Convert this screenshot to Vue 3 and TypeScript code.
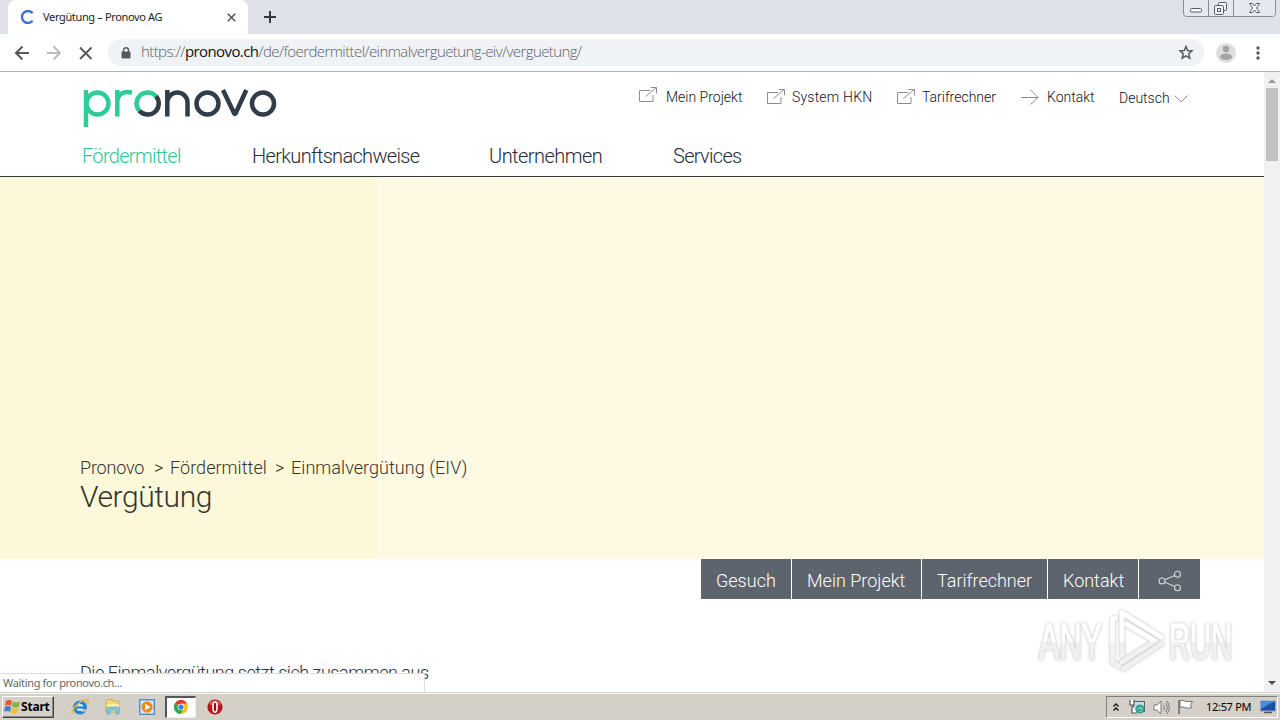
<script setup lang="ts">
interface TextItem {
  label: string
  cls: string
}

const topLinks: TextItem[] = [
  { label: 'Mein Projekt', cls: 'projekt' },
  { label: 'System HKN', cls: 'hkn' },
  { label: 'Tarifrechner', cls: 'tarif' },
]
const mainNav: TextItem[] = [
  { label: 'Fördermittel', cls: 'n1 active' },
  { label: 'Herkunftsnachweise', cls: 'n2' },
  { label: 'Unternehmen', cls: 'n3' },
  { label: 'Services', cls: 'n4' },
]
const actions: TextItem[] = [
  { label: 'Gesuch', cls: 'a1' },
  { label: 'Mein Projekt', cls: 'a2' },
  { label: 'Tarifrechner', cls: 'a3' },
  { label: 'Kontakt', cls: 'a4' },
]
</script>

<template>
  <div class="screen">
    <div class="tabstrip">
      <div class="tab">
        <svg class="spinner" width="14" height="14" viewBox="0 0 14 14"><path d="M11.6 3.200A6 6 0 1 0 11.600 10.800" fill="none" stroke="#3b6fd8" stroke-width="2.300" /></svg>
        <span class="tab-title">Vergütung – Pronovo AG</span>
        <svg class="tab-close" width="9" height="9" viewBox="0 0 9 9"><path d="M.8.8l7.4 7.4M8.2.8L.8 8.2" stroke="#55585c" stroke-width="1.6" /></svg>
      </div>
      <svg class="plus" width="12" height="12" viewBox="0 0 12 12"><path d="M6 0v12M0 6h12" stroke="#35383d" stroke-width="2" /></svg>
      <svg class="winbtns" width="95" height="18" viewBox="0 0 95 18">
        <path d="M.5 0v13.5q0 3 3 3h86q3 0 3-3V0M25.500 0v16M50.500 0v16" fill="#e5e8ee" stroke="#878c99" />
        <rect x="7.500" y="8.500" width="11" height="3.500" rx="1" fill="#fff" stroke="#555b69" />
        <g fill="#f5f6f8" stroke="#555b69"><rect x="35.500" y="2.500" width="8" height="8" rx="1" /><rect x="31.500" y="5.500" width="9" height="9" rx="1" /><rect x="34.500" y="8.500" width="3" height="3" /></g>
        <path d="M66.500 3.500h3l2 2.500 2-2.500h3L73.500 8l3 4.500h-3l-2-2.500-2 2.500h-3L69.500 8z" fill="#fff" stroke="#555b69" />
      </svg>
    </div>

    <div class="toolbar">
      <svg class="navicons" width="82" height="16" viewBox="0 0 82 16" fill="none" stroke-width="2">
        <path d="M15 8H2M8.500 1.500L2 8l6.500 6.500" stroke="#55585c" />
        <path d="M33 8h13M39.500 1.500L46 8l-6.500 6.500" stroke="#b9bbbe" />
        <path d="M66 2.500l11.500 11.500M77.500 2.500l-11.500 11.500" stroke="#55585c" stroke-width="1.900" />
      </svg>
      <div class="omnibox">
        <svg class="lock" width="10" height="12" viewBox="0 0 10 12"><rect x="0.500" y="4.500" width="9" height="7" rx="1" fill="#55595e" /><path d="M2.500 5V3.300a2.500 2.500 0 0 1 5 0V5" fill="none" stroke="#55595e" stroke-width="1.400" /></svg>
        <span class="url">https://<b>pronovo.ch</b>/de/foerdermittel/einmalverguetung-eiv/verguetung/</span>
        <svg class="star" width="16" height="15" viewBox="0 0 16 15"><path d="M8 1.500l1.700 4 4.300.4-3.200 2.900 1 4.300L8 10.800l-3.800 2.300 1-4.300L2 5.900l4.300-.4z" fill="none" stroke="#55595e" stroke-width="1.500" /></svg>
      </div>
      <svg class="avatar" width="20" height="20" viewBox="0 0 20 20"><circle cx="10" cy="10" r="10" fill="#dedede" /><circle cx="10" cy="6" r="3.200" fill="#a4a4a4" /><ellipse cx="10" cy="13.700" rx="6" ry="3.200" fill="#a4a4a4" /></svg>
      <svg class="dots" width="4" height="14" viewBox="0 0 4 14" fill="#55585c"><circle cx="2" cy="2" r="1.700" /><circle cx="2" cy="7" r="1.700" /><circle cx="2" cy="12" r="1.700" /></svg>
    </div>

    <div class="viewport">
      <main class="page">
        <header class="header">
          <div class="brandrow">
            <svg class="logo" width="194" height="40" viewBox="0 0 194 40" fill="none" stroke-width="4.500">
              <g stroke="#2dcc98">
                <path d="M3 2v37" />
                <circle cx="14.500" cy="15.500" r="11" />
                <path d="M34.300 2v26.500M34.300 13.500C34.500 6 41 2.500 49 4.800" />
                <path d="M56.300 22.800A11 11 0 0 1 73 8.200" />
              </g>
              <g stroke="#323c46">
                <path d="M73 8.200A11 11 0 1 1 56.300 22.800" />
                <path d="M84.300 2v26.500M84.300 14.500A10.100 10.100 0 0 1 104.500 14.500V28.500" />
                <circle cx="124.500" cy="15.500" r="11" />
                <path d="M140 2l11.500 24h.8L163.300 2" stroke-linejoin="bevel" />
                <circle cx="180" cy="15.500" r="11" />
              </g>
            </svg>
            <div class="toplinks">
              <a v-for="l in topLinks" :key="l.label" :class="['toplink', l.cls]">
                <svg width="19" height="16" viewBox="0 0 19 16" fill="none" stroke="#8d8d8d"><path d="M11 3.500H.5v11h13.500V8M6.500 9.500L17 .8M11.500.5h6v6" /></svg>
                <span>{{ l.label }}</span>
              </a>
              <a class="toplink kontakt">
                <svg width="19" height="16" viewBox="0 0 19 16" fill="none" stroke="#8d8d8d"><path d="M0 8.500h17M9.500.8l7.500 7.700-7.500 7" /></svg>
                <span>Kontakt</span>
              </a>
              <a class="toplink lang">
                <span>Deutsch</span>
                <svg width="14" height="8" viewBox="0 0 14 8" fill="none" stroke="#8d8d8d"><path d="M.5.500l6.500 6.500 6.500-6.500" /></svg>
              </a>
            </div>
          </div>
          <nav class="mainnav">
            <a v-for="n in mainNav" :key="n.label" :class="n.cls"><span>{{ n.label }}</span></a>
          </nav>
        </header>
        <section class="hero">
          <div class="crumbs"><span class="c1">Pronovo</span><span class="c2"><i>&gt;</i>Fördermittel</span><span class="c3"><i>&gt;</i>Einmalvergütung (EIV)</span></div>
          <h1><span>Vergütung</span></h1>
        </section>
        <div class="actions">
          <a v-for="a in actions" :key="a.label" :class="a.cls"><span>{{ a.label }}</span></a>
          <a class="share"><svg width="24" height="22" viewBox="0 0 24 22" fill="none" stroke="#d4d8db" stroke-width="1.100"><circle cx="4" cy="11" r="3" /><circle cx="19.500" cy="4.300" r="3" /><circle cx="19.500" cy="17.700" r="3" /><path d="M6.800 9.800l10-4.300M6.800 12.200l10 4.300" /></svg></a>
        </div>
        <p class="intro"><span>Die Einmalvergütung setzt sich zusammen aus</span></p>
      </main>
      <div class="scrollbar">
        <i class="up"></i>
        <div class="thumb"></div>
        <i class="down"></i>
      </div>
      <div class="status"><span>Waiting for pronovo.ch...</span></div>
      <svg class="watermark" width="210" height="76" viewBox="1030 604 210 76">
        <defs>
          <linearGradient id="shade" gradientUnits="userSpaceOnUse" x1="0" y1="610" x2="0" y2="672">
            <stop offset=".5" stop-color="#fff" /><stop offset=".52" stop-color="#f1f1f1" /><stop offset="1" stop-color="#f1f1f1" />
          </linearGradient>
          <linearGradient id="letters" gradientUnits="userSpaceOnUse" x1="0" y1="-36" x2="0" y2="0">
            <stop offset=".52" stop-color="#fff" /><stop offset=".54" stop-color="#f1f1f1" />
          </linearGradient>
        </defs>
        <g class="mark">
          <g font-family="Liberation Sans, sans-serif" font-size="50" fill="url(#letters)" stroke="url(#letters)" stroke-width="1.600">
            <text transform="translate(1039 659) scale(.65 1)" textLength="97" lengthAdjust="spacingAndGlyphs">ANY</text>
            <text transform="translate(1169 659) scale(.65 1)" textLength="97" lengthAdjust="spacingAndGlyphs">RUN</text>
          </g>
          <g fill="none" stroke="url(#shade)" stroke-width="5" stroke-linejoin="round" stroke-linecap="round">
            <path d="M1115.500 618L1112.500 619V662L1119 666" />
            <path d="M1122 655V612.500L1161 637" />
            <path d="M1126 624L1155 641L1122 662" />
            <path d="M1161 644L1123 669" />
          </g>
        </g>
      </svg>
    </div>

    <div class="taskbar">
      <div class="start">
        <svg width="17" height="16" viewBox="0 0 17 16"><path d="M2 2q3-2 6 0L7 7Q4 5 1 7z" fill="#e8572a" /><path d="M9 2.500q3 2 7 0L14.500 8Q11 9 8 7.500z" fill="#76b83a" /><path d="M1 8q3-2 6 0l-1 5q-3-2-6 0z" fill="#3f7fd2" /><path d="M8 8.500q3 2 6.500.5L13 14q-3 1.500-6 0z" fill="#f4bd2b" /></svg>
        <span>Start</span>
      </div>
      <svg class="ie" width="18" height="18" viewBox="0 0 18 18"><circle cx="9" cy="9.500" r="5.300" fill="#d9f1fc" stroke="#2386d2" stroke-width="3.400" /><path d="M4 9.500h10" stroke="#2386d2" stroke-width="2.300" /><path d="M10 12.500h7" stroke="#d4d0c8" stroke-width="2" /><path d="M1.500 16C-1 12 12-1 17 2c1 1 0 3-1 4" fill="none" stroke="#e7b92d" stroke-width="1.500" /></svg>
      <svg class="folder" width="18" height="18" viewBox="0 0 18 18"><path d="M2 3l1-1.500h5L9 3h6v11H2z" fill="#f0d879" stroke="#cdae4e" /><path d="M3 6h12v7H3z" fill="#fff1ac" /><path d="M3 16v-5q0-2 2-2h8q2 0 2 2v5h-3v-4H6v4z" fill="#85c9ea" stroke="#5a9fc2" stroke-width=".7" /></svg>
      <svg class="wmp" width="17" height="17" viewBox="0 0 17 17"><rect x=".5" y=".5" width="15" height="15" fill="#8fc3ec" stroke="#528fc4" /><rect x="2" y="2" width="12" height="12" fill="#d9edfa" /><circle cx="8" cy="8" r="5.700" fill="#f18a1c" /><path d="M6.200 4.800L11.500 8l-5.300 3.200z" fill="#fff" /></svg>
      <div class="chrome-btn">
        <svg width="14" height="14" viewBox="0 0 16 16"><circle cx="8" cy="8" r="8" fill="#fbc116" /><path d="M8 8L1 4A8 8 0 0 1 15 4H8z" fill="#e33b2e" /><path d="M8 8L1 4a8 8 0 0 0 6.500 12L11 10z" fill="#2ca94f" /><circle cx="8" cy="8" r="3.800" fill="#fff" /><circle cx="8" cy="8" r="3" fill="#3e7de0" /></svg>
      </div>
      <svg class="opera" width="16" height="16" viewBox="0 0 16 16"><circle cx="8" cy="8" r="7.600" fill="#b9161b" /><path d="M2 5a7 7 0 0 1 12 0q-6 3-12 0z" fill="#dd5a56" /><ellipse cx="8" cy="8" rx="2" ry="5.300" fill="#8b0d12" stroke="#fff" stroke-width="1.600" /></svg>
      <div class="tray">
        <svg class="chev" width="6" height="9" viewBox="0 0 6 9" fill="none" stroke="#111" stroke-width="1.300"><path d="M.5 3.500L3 1l2.500 2.500M.5 7.500L3 5l2.500 2.500" /></svg>
        <svg class="net" width="17" height="16" viewBox="0 0 17 16"><rect x="4.500" y="2.500" width="11" height="10" fill="#c9dde2" stroke="#4b6269" /><path d="M1 1v5h4V1M3 6v8h5" fill="#fff" stroke="#555" stroke-width="1.200" /><circle cx="11" cy="10" r="4.600" fill="#36a18f" /><path d="M8.500 10.500q2-3 5-1M11 13l2-2" stroke="#bfeee0" fill="none" /></svg>
        <svg class="vol" width="17" height="15" viewBox="0 0 17 15" fill="#fff" stroke="#777"><path d="M1 5h3l4-4v13l-4-4H1z" /><path d="M10.500 5q2 2.500 0 5M12.500 3q3.500 4.500 0 9M14 1q4.500 6.500 0 13" fill="none" /></svg>
        <svg class="flag" width="17" height="16" viewBox="0 0 17 16"><path d="M2 1v14" stroke="#666" stroke-width="1.500" /><path d="M3 1.500q3-1 6 1h6.500l-2 3 1 3.500H9q-3-2-6-.5z" fill="#fff" stroke="#777" /></svg>
        <span class="clock">12:57 PM</span>
        <svg class="desk" width="16" height="14" viewBox="0 0 16 14"><rect x=".5" y="1" width="15" height="10" fill="#1d4fa8" stroke="#87a6ca" /><path d="M1 1.500h14Q9 4 1 9z" fill="#4e8ae0" /><path d="M4 12.500h8" stroke="#555" stroke-width="1.500" /></svg>
      </div>
    </div>
  </div>
</template>

<style>
html, body { overflow: hidden; }
</style>

<style scoped>
* { box-sizing: border-box; }
svg { display: block; flex: none; }
.screen { width: 1280px; height: 720px; display: flex; flex-direction: column; background: #fff; font-family: Roboto, "Liberation Sans", sans-serif; color: #262d36; overflow: hidden; white-space: nowrap; }

.tabstrip { height: 34px; background: #dee1e8; display: flex; flex: none; padding-left: 8px; }
.tab { width: 240px; height: 34px; background: #fff; border-radius: 8px 8px 0 0; display: flex; align-items: center; padding-left: 12px; }
.spinner { margin-left: 1px; }
.tab-title { font: 11px/16px "Noto Sans", sans-serif; color: #222; width: 184px; margin-left: 8px; letter-spacing: -.35px; }
.plus { margin: 11px 0 0 16px; }
.winbtns { margin-left: auto; margin-right: 2px; }

.toolbar { height: 38px; border-bottom: 1px solid #b4b4b4; display: flex; align-items: center; flex: none; padding-left: 14px; }
.omnibox { width: 1096px; height: 27px; margin-left: 12px; border-radius: 14px; background: #f0f3f6; display: flex; align-items: center; padding: 0 10px 0 13px; }
.url { font: 300 15px/20px "Open Sans", sans-serif; color: #5c5f64; margin: -3px auto 0 10px; letter-spacing: -.59px; }
.url b { font-weight: 400; color: #111; }
.avatar { margin-left: 12px; }
.dots { margin-left: 20px; }

.viewport { height: 620px; display: flex; position: relative; flex: none; overflow: hidden; }
.page { width: 1264px; height: 620px; }
.header { height: 105px; border-bottom: 1px solid #323b3c; }
.brandrow { display: flex; height: 64px; padding-left: 83px; }
.logo { margin-top: 16px; }
.toplinks { display: flex; margin-left: 362px; padding-top: 15px; }
.toplink { display: flex; height: 20px; font-size: 14px; line-height: 20px; letter-spacing: 0; font-weight: 300; color: #10141a; }
.toplink span { margin-left: 8px; }
.toplink svg { margin-top: 2px; }
.projekt { width: 128px; }
.projekt svg { margin-top: 0; }
.hkn { width: 130px; letter-spacing: .2px; }
.hkn span, .tarif span { margin-left: 6px; }
.tarif { width: 124px; }
.kontakt { width: 98px; }
.kontakt span { margin-left: 7px; }
.lang { width: 69px; }
.lang span { width: 49px; margin-left: 0; line-height: 22px; }
.lang svg { margin: 8px 0 0 6px; }

.mainnav { display: flex; padding: 8px 0 0 82px; font-size: 20px; line-height: 24px; font-weight: 300; letter-spacing: -.68px; }
.n1 { width: 170px; } .n2 { width: 237px; } .n3 { width: 184px; letter-spacing: -.52px; }
.active { color: #2dc795; }

.hero { height: 382px; padding: 280px 0 0 80px; background: linear-gradient(90deg, #fdf8d9 378px, #fdf9e3 378px); color: #33342b; }
.crumbs { height: 23px; display: flex; font-size: 18px; line-height: 22px; font-weight: 300; letter-spacing: .05px; }
.crumbs i { font-style: normal; display: inline-block; width: 16px; }
.c1 { width: 74px; letter-spacing: -.2px; } .c2 { width: 121px; }
h1 { margin: 0; font-size: 30px; line-height: 34px; font-weight: 300; letter-spacing: -.4px; }

.actions { display: flex; gap: 1px; margin-left: 701px; height: 40px; }
.actions a { background: #5d646d; color: #fff; font-size: 18px; font-weight: 300; line-height: 43px; letter-spacing: 0; padding-left: 15px; }
.actions .a1 { width: 90px; } .actions .a2 { width: 129px; } .actions .a3 { width: 125px; } .actions .a4 { width: 90px; }
.actions .share { width: 61px; padding: 11px 0 0 19px; }
.intro { margin: 62px 0 0 80px; font-size: 18px; line-height: 24px; font-weight: 300; letter-spacing: -.46px; }

.scrollbar { width: 16px; background: #f1f1f1; display: flex; flex-direction: column; align-items: center; }
.up { border: 4px solid transparent; border-top: 0; border-bottom: 4px solid #999; margin-top: 7px; }
.thumb { width: 12px; height: 73px; background: #c1c1c1; margin-top: 5px; }
.down { border: 4px solid transparent; border-bottom: 0; border-top: 4px solid #505050; margin: auto 0 7px; }
.status { position: absolute; left: 0; bottom: 0; width: 425px; height: 19px; border-top: 1px solid #ddd; border-right: 1px solid #ddd; background: #fff; font: 11px/18px "Noto Sans", sans-serif; color: #666; padding-left: 3px; letter-spacing: -.33px; }
.watermark { position: absolute; left: 1030px; top: 532px; }
.mark { filter: drop-shadow(0 0 1.500px rgba(0, 0, 0, .28)); }

.taskbar { height: 28px; background: #d4d0c8; box-shadow: inset 0 1px #d4d0c8, inset 0 2px #fff; display: flex; flex: none; padding-top: 4px; }
.start { width: 52px; height: 22px; margin-left: 2px; border: 1px solid #fff; border-right-color: #404040; border-bottom-color: #404040; box-shadow: inset -1px -1px #888; display: flex; align-items: center; padding-left: 1px; font: bold 12px/18px "Noto Sans", sans-serif; color: #000; letter-spacing: -.2px; }
.ie { margin: 2px 0 0 17px; }
.folder { margin: 2px 0 0 15px; }
.wmp { margin: 3px 0 0 17px; }
.chrome-btn { width: 31px; height: 22px; margin-left: 9px; background: #fff; border: 2px solid #555; border-right: 1px solid #eee; border-bottom: 1px solid #eee; padding: 2px 0 0 7px; }
.opera { margin: 3px 0 0 11px; }
.tray { width: 172px; height: 22px; margin: 0 2px 0 auto; border: 1px solid #808080; border-right-color: #fff; border-bottom-color: #fff; display: flex; align-items: center; padding-left: 6px; color: #000; font: 11px/20px "Noto Sans", sans-serif; }
.net { margin-left: 10px; }
.vol { margin-left: 7px; }
.flag { margin-left: 7px; }
.clock { width: 46px; margin-left: 12px; letter-spacing: -.3px; }
.desk { margin-left: 8px; }
</style>
